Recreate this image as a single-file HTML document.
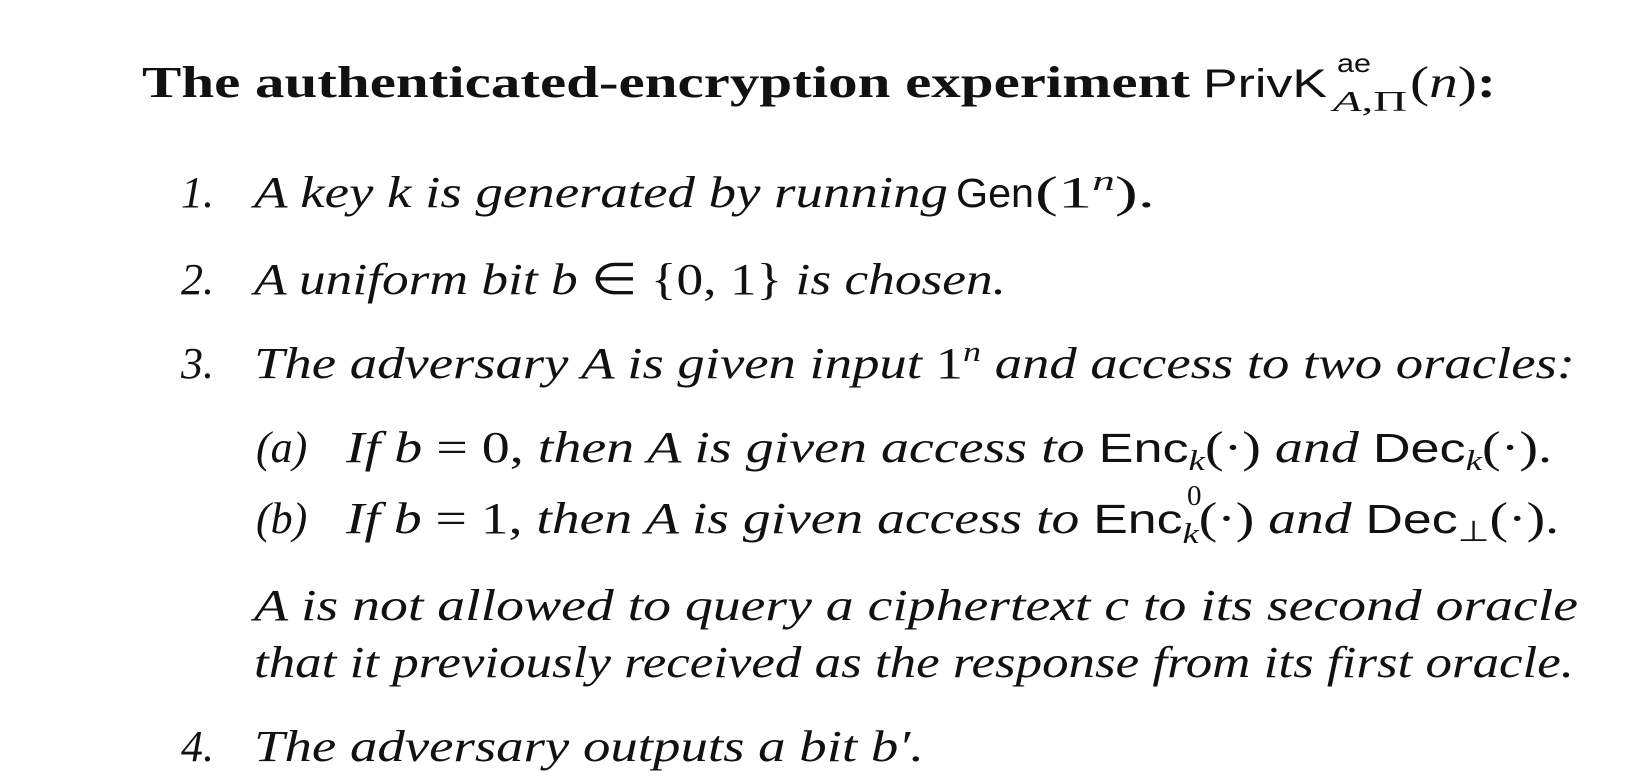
<!DOCTYPE html>
<html><head><meta charset="utf-8"><style>
html,body{margin:0;padding:0;background:#fff;}
svg{display:block}
text{fill:#111;}
.i{font-family:"Liberation Serif",serif;font-style:italic;}
.r{font-family:"Liberation Serif",serif;font-style:normal;}
.s{font-family:"Liberation Sans",sans-serif;font-style:normal;}
.b{font-family:"Liberation Serif",serif;font-weight:bold;}
</style></head><body>
<svg width="1646" height="779" viewBox="0 0 1646 779" xmlns="http://www.w3.org/2000/svg">
<text class="b" x="142" y="97" font-size="44" textLength="1048" lengthAdjust="spacingAndGlyphs">The authenticated-encryption experiment</text>
<text class="s" x="1203" y="97" font-size="40" textLength="124" lengthAdjust="spacingAndGlyphs">PrivK</text>
<text class="s" x="1337" y="72" font-size="26" textLength="34" lengthAdjust="spacingAndGlyphs">ae</text>
<text class="i" x="1333" y="111" font-size="29" textLength="74" lengthAdjust="spacingAndGlyphs">A<tspan class="r">,Π</tspan></text>
<text class="r" x="1410" y="97" font-size="44" textLength="86" lengthAdjust="spacingAndGlyphs">(<tspan class="i">n</tspan>)<tspan class="b">:</tspan></text>

<text class="i" x="181" y="207" font-size="44">1.</text>
<text class="i" x="254" y="207" font-size="44" textLength="694" lengthAdjust="spacingAndGlyphs">A key k is generated by running</text>
<text class="s" x="956" y="207" font-size="41" textLength="78" lengthAdjust="spacingAndGlyphs">Gen</text>
<text class="r" x="1035" y="207" font-size="44" textLength="120" lengthAdjust="spacingAndGlyphs">(1<tspan class="i" font-size="29" dy="-17">n</tspan><tspan dy="17">).</tspan></text>

<text class="i" x="181" y="294" font-size="44">2.</text>
<text class="i" x="254" y="294" font-size="44" textLength="752" lengthAdjust="spacingAndGlyphs">A uniform bit b <tspan class="r">∈ {0, 1}</tspan> is chosen.</text>

<text class="i" x="181" y="378" font-size="44">3.</text>
<text class="i" x="254" y="378" font-size="44" textLength="1321" lengthAdjust="spacingAndGlyphs">The adversary A is given input <tspan class="r">1</tspan><tspan font-size="29" dy="-17">n</tspan><tspan dy="17"> and access to two oracles:</tspan></text>

<text class="i" x="256" y="462" font-size="44">(a)</text>
<text class="i" x="346" y="462" font-size="44" textLength="1206" lengthAdjust="spacingAndGlyphs">If b <tspan class="r">= 0,</tspan> then A is given access to <tspan class="s" font-size="41">Enc</tspan><tspan font-size="29" dy="8">k</tspan><tspan class="r" dy="-8">(·)</tspan> and <tspan class="s" font-size="41">Dec</tspan><tspan font-size="29" dy="8">k</tspan><tspan class="r" dy="-8">(·).</tspan></text>

<text class="i" x="256" y="533" font-size="44">(b)</text>
<text class="i" x="346" y="533" font-size="44" textLength="1213" lengthAdjust="spacingAndGlyphs">If b <tspan class="r">= 1,</tspan> then A is given access to <tspan class="s" font-size="41">Enc</tspan><tspan font-size="29" dy="10">k</tspan><tspan class="r" dy="-10">(·)</tspan> and <tspan class="s" font-size="41">Dec</tspan><tspan class="r" font-size="29" dy="8">⊥</tspan><tspan class="r" dy="-8">(·).</tspan></text>
<text class="r" x="1187" y="505" font-size="29">0</text>

<text class="i" x="254" y="620" font-size="44" textLength="1324" lengthAdjust="spacingAndGlyphs">A is not allowed to query a ciphertext c to its second oracle</text>
<text class="i" x="254" y="677" font-size="44" textLength="1320" lengthAdjust="spacingAndGlyphs">that it previously received as the response from its first oracle.</text>

<text class="i" x="181" y="761" font-size="44">4.</text>
<text class="i" x="254" y="761" font-size="44" textLength="670" lengthAdjust="spacingAndGlyphs">The adversary outputs a bit b′.</text>
</svg>
</body></html>
